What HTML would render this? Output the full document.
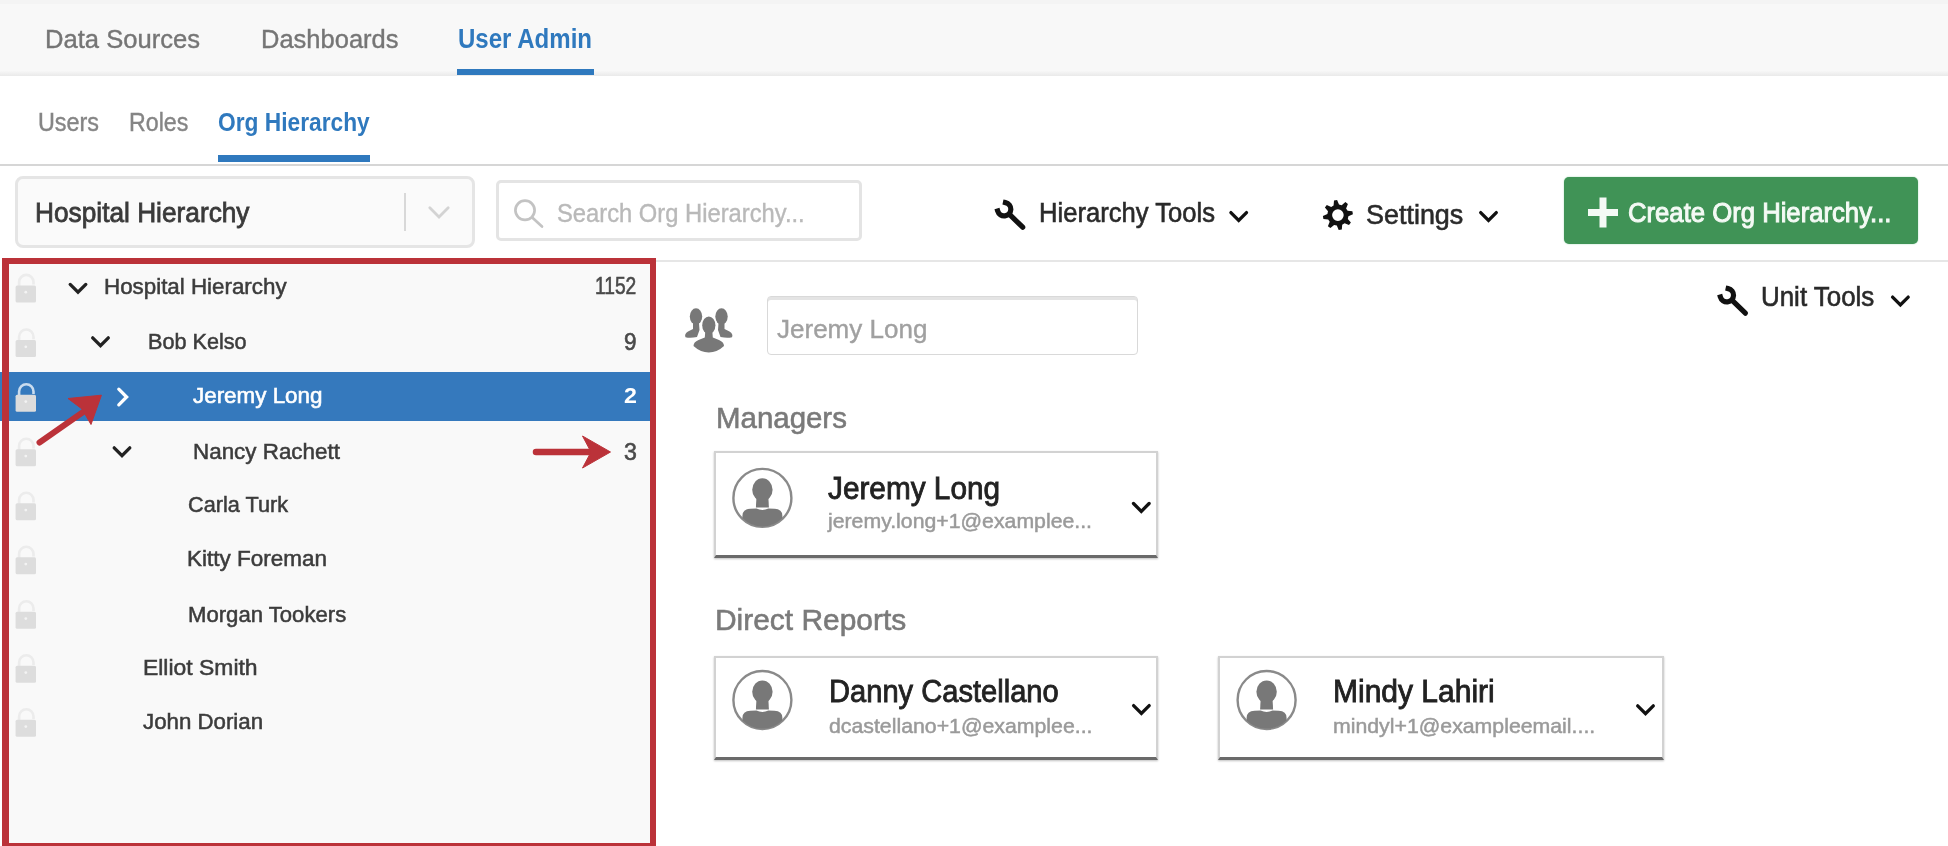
<!DOCTYPE html>
<html lang="en">
<head>
<meta charset="utf-8">
<title>User Admin - Org Hierarchy</title>
<style>
html,body{margin:0;padding:0;background:#fff;}
body{width:1948px;height:846px;overflow:hidden;font-family:"Liberation Sans",Arial,sans-serif;}
#app{position:relative;width:1948px;height:846px;overflow:hidden;background:#fff;}
#app div,#app svg{position:absolute;box-sizing:border-box;}
.t{filter:blur(0.45px);position:absolute;white-space:nowrap;line-height:normal;transform-origin:0 50%;display:inline-block;}
#topbar{left:0;top:0;width:1948px;height:75.5px;background:linear-gradient(#f4f4f4 0,#f4f4f4 3.5px,#f8f8f8 4.5px,#f8f8f8 70.5px,#ebebeb 75.5px);}
.tabline{background:#2f79be;}
#subline{left:0;top:164px;width:1948px;height:2px;background:#d6d6d6;}
#hsel{left:14.5px;top:175.5px;width:460.5px;height:72.5px;border:3px solid #e5e5e5;border-radius:8px;background:#fafafa;}
#hsel-sep{left:404px;top:193px;width:2px;height:38px;background:#d8d8d8;}
#search{left:495.5px;top:179.5px;width:366.2px;height:61.5px;border:3px solid #e4e4e4;border-radius:5px;background:#fff;}
#create{left:1564px;top:176.5px;width:354px;height:67.5px;border-radius:5px;background:#409356;box-shadow:0 0 1.5px #8fcfa4;}
#toolline{left:650px;top:259.5px;width:1298px;height:2.5px;background:#e6e6e6;}
#tree{left:2.5px;top:258px;width:653.5px;height:590px;background:#f9f9f9;}
#sel{left:0;top:372px;width:650px;height:48.5px;background:#3579bd;}
#treeborder{left:2.1px;top:258px;width:654.1px;height:591px;border:solid #bb3239;border-width:6.4px 6.5px 6px 7.8px;}
#unitname{left:766.5px;top:295.5px;width:371px;height:59.5px;border:1.6px solid #d9d9d9;border-radius:4px;background:#fff;box-shadow:inset 0 3px 0 #e4e4e4;}
.card{background:#fff;border:2px solid #d2d2d2;border-bottom:3px solid #6a6a6a;box-shadow:0 1px 2px rgba(0,0,0,.25);}
#icons{left:0;top:0;width:1948px;height:846px;filter:blur(0.45px);}

</style>
</head>
<body>
<div id="app">
<div id="topbar"></div>
<div class="tabline" style="left:456.5px;top:69px;width:137.5px;height:6px"></div>
<div class="tabline" style="left:218px;top:155px;width:152px;height:6.5px"></div>
<div id="subline"></div>
<div id="hsel"></div><div id="hsel-sep"></div>
<div id="search"></div>
<div id="create"></div>
<div id="toolline"></div>
<div id="tree"></div>
<div id="sel"></div>
<div id="treeborder"></div>
<div id="unitname"></div>
<div class="card" style="left:714px;top:451px;width:444px;height:107px"></div>
<div class="card" style="left:714px;top:655.5px;width:444px;height:104.5px"></div>
<div class="card" style="left:1218px;top:655.5px;width:446px;height:104.5px"></div>
<svg id="icons" width="1948" height="846" viewBox="0 0 1948 846">
<defs>
  <g id="lock">
    <path d="M3.5,14 V9.5 A7.2,7.2 0 0 1 17.9,9.5 V12" fill="none" stroke-width="2.6"/>
    <rect x="0" y="12.8" width="20.4" height="17" rx="1.5" stroke="none"/>
    <circle cx="10.2" cy="19.6" r="1.4" fill="#f3f3f3" stroke="none"/>
  </g>
  <g id="chev-d"><polyline points="-7.8,-4.2 0,3.6 7.8,-4.2" fill="none" stroke-width="3.3" stroke-linecap="round" stroke-linejoin="miter"/></g>
  <g id="wrench" fill="none" stroke="#111" stroke-width="5.2">
    <path d="M3.4,11.2 A6.7,6.7 0 1 0 11.2,2.8" stroke-linecap="square"/>
    <path d="M15.2,14.6 L28.4,27.4" stroke-linecap="round"/>
  </g>
  <g id="avatar">
    <clipPath id="avclip"><circle cx="0" cy="0" r="28.6"/></clipPath>
    <circle cx="0" cy="0" r="29" fill="#fff" stroke="#8a8a8a" stroke-width="2.4"/>
    <g clip-path="url(#avclip)" fill="#787878">
      <ellipse cx="0" cy="-8.2" rx="10.2" ry="11.4"/>
      <path d="M-6,0 L6,0 L6.5,9.5 L-6.5,9.5 Z"/>
      <path d="M-20,30 L-20,18 Q-20,11 -12,10.8 L-6,10.6 Q0,13.4 6,10.6 L12,10.8 Q20,11 20,18 L20,30 Z"/>
    </g>
  </g>
</defs>
<!-- hierarchy select chevron -->
<polyline points="429.8,207.8 439,217 448.2,207.8" fill="none" stroke="#d3d3d3" stroke-width="2.8" stroke-linecap="round"/>
<!-- search magnifier -->
<g fill="none" stroke="#c3c3c3" stroke-width="2.7" stroke-linecap="round"><circle cx="525" cy="210.3" r="9.6"/><path d="M532.2,217.5 L542,226.5"/></g>
<!-- toolbar icons -->
<use href="#wrench" x="994.3" y="199.8"/>
<g stroke="#111"><use href="#chev-d" x="1238.7" y="216.8"/></g>
<g id="gear" fill="#111" fill-rule="evenodd"><path d="M1333.6,205.4 L1334.0,200.6 L1337.1,200.1 L1339.0,204.6 L1341.7,205.2 L1345.4,202.1 L1347.9,204.0 L1346.1,208.4 L1347.6,210.8 L1352.4,211.2 L1352.9,214.3 L1348.4,216.2 L1347.8,218.9 L1350.9,222.6 L1349.0,225.1 L1344.6,223.3 L1342.2,224.8 L1341.8,229.6 L1338.7,230.1 L1336.8,225.6 L1334.1,225.0 L1330.4,228.1 L1327.9,226.2 L1329.7,221.8 L1328.2,219.4 L1323.4,219.0 L1322.9,215.9 L1327.4,214.0 L1328.0,211.3 L1324.9,207.6 L1326.8,205.1 L1331.2,206.9 Z M1332.1,215.1 a5.8,5.8 0 1 0 11.6,0 a5.8,5.8 0 1 0 -11.6,0 Z"/></g>
<g stroke="#111"><use href="#chev-d" x="1488.5" y="216.8"/></g>
<!-- plus -->
<path d="M1599.5,197.5 h7 v11.5 h11.5 v7 h-11.5 v11.5 h-7 v-11.5 h-11.5 v-7 h11.5 z" fill="#f4faf5"/>
<!-- unit tools -->
<use href="#wrench" x="1717" y="285.8"/>
<g stroke="#111"><use href="#chev-d" x="1900.4" y="301.3"/></g>
<!-- tree locks -->
<g fill="#dddddd" stroke="#ececec">
<use href="#lock" x="15.6" y="272.6"/>
<use href="#lock" x="15.6" y="327.2"/>
<use href="#lock" x="15.6" y="436.5"/>
<use href="#lock" x="15.6" y="490.5"/>
<use href="#lock" x="15.6" y="544.5"/>
<use href="#lock" x="15.6" y="599"/>
<use href="#lock" x="15.6" y="653"/>
<use href="#lock" x="15.6" y="707"/>
</g>
<g fill="#dcdcdc" stroke="#c9dcef"><use href="#lock" x="15.6" y="382"/></g>
<!-- tree chevrons -->
<g stroke="#222"><use href="#chev-d" x="78" y="288.6"/><use href="#chev-d" x="100.5" y="342"/><use href="#chev-d" x="122" y="452"/></g>
<polyline points="118.8,389.2 126.6,397 118.8,404.8" fill="none" stroke="#fff" stroke-width="3.3" stroke-linecap="round"/>
<!-- red arrows -->
<g fill="#bb3239" stroke="#bb3239">
<path d="M39.5,442.5 L86,410" fill="none" stroke-width="6" stroke-linecap="round"/>
<path d="M101.4,395.2 L68,398.5 L82,409 L91,424.5 Z" stroke-width="1" stroke-linejoin="round"/>
<path d="M536,452 L596,452" fill="none" stroke-width="6.5" stroke-linecap="round"/>
<path d="M610.5,452 L582.5,436 L591,452 L582.5,468 Z" stroke-width="1" stroke-linejoin="round"/>
</g>
<!-- group icon -->
<g fill="#787878">
<ellipse cx="696" cy="316.5" rx="6.2" ry="8.2"/>
<path d="M693,323 L699,323 L699.5,330 L697,337 Q690,338.5 685.5,337.2 Q684,334 688,331.5 L693,329 Z"/>
<ellipse cx="721.5" cy="316.5" rx="6.2" ry="8.2"/>
<path d="M724.5,323 L718.5,323 L718,330 L720.5,337 Q727.5,338.5 732,337.2 Q733.5,334 729.5,331.5 L724.5,329 Z"/>
<g stroke="#fff" stroke-width="3.4" stroke-linejoin="round">
<path d="M705.3,331 L712.3,331 L712.8,337.5 L719,340 Q724,342 724,346 Q717,352.5 708.8,352.5 Q700.5,352.5 693.5,346 Q693.5,342 698.5,340 L704.8,337.5 Z"/>
<ellipse cx="708.8" cy="325.2" rx="6.6" ry="8.8"/>
</g>
<path d="M705.3,331 L712.3,331 L712.8,337.5 L719,340 Q724,342 724,346 Q717,352.5 708.8,352.5 Q700.5,352.5 693.5,346 Q693.5,342 698.5,340 L704.8,337.5 Z"/>
<ellipse cx="708.8" cy="325.2" rx="6.6" ry="8.8"/>
</g>
<!-- avatars -->
<use href="#avatar" x="762.4" y="497.9"/>
<use href="#avatar" x="762.4" y="700"/>
<use href="#avatar" x="1266.6" y="700"/>
<!-- card chevrons -->
<g stroke="#111"><use href="#chev-d" x="1141.3" y="507.7"/><use href="#chev-d" x="1141.4" y="709.8"/><use href="#chev-d" x="1645.5" y="710"/></g>
</svg>

<span class="t" id="t0" style="left:45.0px;top:24.0px;font-size:26px;color:#757575;-webkit-text-stroke:0.4px;transform:scaleX(0.9839);">Data Sources</span>
<span class="t" id="t1" style="left:261.0px;top:24.0px;font-size:26px;color:#757575;-webkit-text-stroke:0.4px;transform:scaleX(0.9807);">Dashboards</span>
<span class="t" id="t2" style="left:458.2px;top:24.0px;font-size:27px;color:#2f79be;font-weight:700;transform:scaleX(0.8902);">User Admin</span>
<span class="t" id="t3" style="left:38.0px;top:108.0px;font-size:25px;color:#858585;-webkit-text-stroke:0.4px;transform:scaleX(0.9342);">Users</span>
<span class="t" id="t4" style="left:129.0px;top:108.0px;font-size:25px;color:#858585;-webkit-text-stroke:0.4px;transform:scaleX(0.9277);">Roles</span>
<span class="t" id="t5" style="left:218.0px;top:108.0px;font-size:25px;color:#2f79be;font-weight:700;transform:scaleX(0.9103);">Org Hierarchy</span>
<span class="t" id="t6" style="left:35.0px;top:197.0px;font-size:28px;color:#3a3a3a;-webkit-text-stroke:0.8px;transform:scaleX(0.9377);">Hospital Hierarchy</span>
<span class="t" id="t7" style="left:557.3px;top:198.0px;font-size:26px;color:#b9b9b9;-webkit-text-stroke:0.4px;transform:scaleX(0.9134);">Search Org Hierarchy...</span>
<span class="t" id="t8" style="left:1039.0px;top:198.0px;font-size:27px;color:#2a2a2a;-webkit-text-stroke:0.6px;transform:scaleX(0.9484);">Hierarchy Tools</span>
<span class="t" id="t9" style="left:1366.4px;top:200.0px;font-size:27px;color:#2a2a2a;-webkit-text-stroke:0.6px;transform:scaleX(0.9973);">Settings</span>
<span class="t" id="t10" style="left:1628.0px;top:198.0px;font-size:27px;color:#f4faf5;-webkit-text-stroke:1px;transform:scaleX(0.9509);">Create Org Hierarchy...</span>
<span class="t" id="t11" style="left:104.4px;top:273.0px;font-size:23px;color:#3c3c3c;-webkit-text-stroke:0.55px;transform:scale(0.9718,0.93);transform-origin:0 21px;">Hospital Hierarchy</span>
<span class="t" id="t12" style="left:595.2px;top:273.0px;font-size:23px;color:#4a4a4a;-webkit-text-stroke:0.6px;transform:scaleX(0.8349);">1152</span>
<span class="t" id="t13" style="left:148.4px;top:328.0px;font-size:23px;color:#3c3c3c;-webkit-text-stroke:0.55px;transform:scale(0.9403,0.93);transform-origin:0 21px;">Bob Kelso</span>
<span class="t" id="t14" style="left:624.0px;top:329.0px;font-size:23px;color:#4a4a4a;-webkit-text-stroke:0.6px;transform:scaleX(0.9768);">9</span>
<span class="t" id="t15" style="left:192.8px;top:382.0px;font-size:23px;color:#ffffff;-webkit-text-stroke:0.6px;transform:scale(0.9739,0.93);transform-origin:0 21px;">Jeremy Long</span>
<span class="t" id="t16" style="left:624.0px;top:383.0px;font-size:22px;color:#ffffff;font-weight:700;transform:scaleX(1.0531);">2</span>
<span class="t" id="t17" style="left:192.8px;top:438.0px;font-size:23px;color:#3c3c3c;-webkit-text-stroke:0.55px;transform:scale(0.9738,0.93);transform-origin:0 21px;">Nancy Rachett</span>
<span class="t" id="t18" style="left:624.0px;top:439.0px;font-size:23px;color:#4a4a4a;-webkit-text-stroke:0.6px;transform:scaleX(1.0081);">3</span>
<span class="t" id="t19" style="left:187.6px;top:491.0px;font-size:23px;color:#3c3c3c;-webkit-text-stroke:0.55px;transform:scale(0.9426,0.93);transform-origin:0 21px;">Carla Turk</span>
<span class="t" id="t20" style="left:187.3px;top:545.0px;font-size:23px;color:#3c3c3c;-webkit-text-stroke:0.55px;transform:scale(0.9780,0.93);transform-origin:0 21px;">Kitty Foreman</span>
<span class="t" id="t21" style="left:187.8px;top:601.0px;font-size:23px;color:#3c3c3c;-webkit-text-stroke:0.55px;transform:scale(0.9617,0.93);transform-origin:0 21px;">Morgan Tookers</span>
<span class="t" id="t22" style="left:142.9px;top:654.0px;font-size:23px;color:#3c3c3c;-webkit-text-stroke:0.55px;transform:scale(0.9961,0.93);transform-origin:0 21px;">Elliot Smith</span>
<span class="t" id="t23" style="left:142.9px;top:708.0px;font-size:23px;color:#3c3c3c;-webkit-text-stroke:0.55px;transform:scale(0.9683,0.93);transform-origin:0 21px;">John Dorian</span>
<span class="t" id="t24" style="left:1761.4px;top:282.0px;font-size:27px;color:#2a2a2a;-webkit-text-stroke:0.6px;transform:scaleX(0.9597);">Unit Tools</span>
<span class="t" id="t25" style="left:777.0px;top:314.0px;font-size:27px;color:#a0a0a0;-webkit-text-stroke:0.4px;transform:scale(0.9635,0.96);transform-origin:0 24px;">Jeremy Long</span>
<span class="t" id="t26" style="left:715.6px;top:401.0px;font-size:30px;color:#7a7a7a;-webkit-text-stroke:0.6px;transform:scaleX(0.9812);">Managers</span>
<span class="t" id="t27" style="left:828.3px;top:471.0px;font-size:31px;color:#222222;-webkit-text-stroke:0.85px;transform:scaleX(0.9603);">Jeremy Long</span>
<span class="t" id="t28" style="left:828.3px;top:509.0px;font-size:21px;color:#9a9a9a;-webkit-text-stroke:0.5px;transform:scaleX(1.0122);">jeremy.long+1@examplee...</span>
<span class="t" id="t29" style="left:715.2px;top:603.0px;font-size:30px;color:#7a7a7a;-webkit-text-stroke:0.6px;transform:scaleX(0.9973);">Direct Reports</span>
<span class="t" id="t30" style="left:828.5px;top:674.0px;font-size:31px;color:#222222;-webkit-text-stroke:0.85px;transform:scaleX(0.9387);">Danny Castellano</span>
<span class="t" id="t31" style="left:828.5px;top:714.0px;font-size:21px;color:#9a9a9a;-webkit-text-stroke:0.5px;transform:scaleX(1.0132);">dcastellano+1@examplee...</span>
<span class="t" id="t32" style="left:1333.3px;top:674.0px;font-size:31px;color:#222222;-webkit-text-stroke:0.85px;transform:scaleX(0.9675);">Mindy Lahiri</span>
<span class="t" id="t33" style="left:1333.3px;top:714.0px;font-size:21px;color:#9a9a9a;-webkit-text-stroke:0.5px;transform:scaleX(1.0130);">mindyl+1@exampleemail....</span>
</div>
</body>
</html>
